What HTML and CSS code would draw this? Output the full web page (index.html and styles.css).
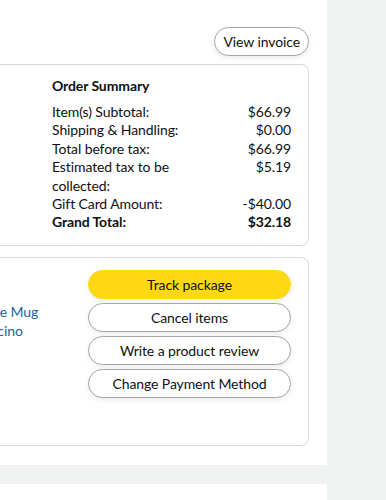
FILE: index.html
```html
<!DOCTYPE html>
<html lang="en">
<head>
    <meta charset="UTF-8">
    <meta name="viewport" content="width=device-width, initial-scale=1.0">
    <title>Order details</title>
    <link rel="stylesheet" href="styles.css">
</head>
<body>
    <div id="page">
        <div id="mainColumn">
            <div class="orderSection">
                <div class="orderHeader">
                    <a class="pillButton invoiceButton" href="#">View invoice</a>
                </div>

                <div class="card summaryCard">
                    <div class="summaryBox">
                        <h3 class="summaryTitle">Order Summary</h3>
                        <div class="summaryRow"><span class="label">Item(s) Subtotal:</span><span class="value">$66.99</span></div>
                        <div class="summaryRow"><span class="label">Shipping &amp; Handling:</span><span class="value">$0.00</span></div>
                        <div class="summaryRow"><span class="label">Total before tax:</span><span class="value">$66.99</span></div>
                        <div class="summaryRow"><span class="label">Estimated tax to be collected:</span><span class="value">$5.19</span></div>
                        <div class="summaryRow"><span class="label">Gift Card Amount:</span><span class="value">-$40.00</span></div>
                        <div class="summaryRow grandTotal"><span class="label">Grand Total:</span><span class="value">$32.18</span></div>
                    </div>
                </div>

                <div class="card shipmentCard">
                    <div class="itemInfo">
                        <a class="productLink" href="#">Tall Coffee Mug<br>- Cappuccino</a>
                    </div>
                    <div class="actionList">
                        <a class="pillButton primaryButton" href="#">Track package</a>
                        <a class="pillButton" href="#">Cancel items</a>
                        <a class="pillButton" href="#">Write a product review</a>
                        <a class="pillButton" href="#">Change Payment Method</a>
                    </div>
                </div>
            </div>
            <div class="sectionDivider"></div>
            <div class="orderSection nextSection"></div>
        </div>
        <div id="sideColumn"></div>
    </div>
</body>
</html>
```

FILE: styles.css
```css
body {
    margin: 0;
    font-family: Lato, "Liberation Sans", Arial, sans-serif;
    font-size: 14px;
    letter-spacing: -0.1px;
    color: #0f1111;
    background-color: #f0f2f2;
    overflow: hidden;
}
#page {
    display: flex;
    height: 500px;
}
#mainColumn {
    width: 327px;
    flex-shrink: 0;
    display: flex;
    flex-direction: column;
}
#sideColumn {
    flex: 1;
    background-color: #f0f2f2;
}
.orderSection {
    background-color: #fff;
    padding: 27px 18px 19px 0;
}
.nextSection {
    flex: 1;
    padding: 0;
}
.sectionDivider {
    height: 19px;
    background-color: #f0f2f2;
}
.orderHeader {
    display: flex;
    justify-content: flex-end;
    margin-bottom: 8px;
}
.card {
    margin-left: -40px;
    border: 1px solid #d5d9d9;
    border-radius: 8px;
    background-color: #fff;
}
.summaryCard {
    display: flex;
    justify-content: flex-end;
    padding: 12px 17px 13px 0;
    margin-bottom: 11px;
}
.summaryBox {
    width: 239px;
}
.summaryTitle {
    margin: 0 0 8px 0;
    font-size: 14px;
    font-weight: 700;
    line-height: 18px;
}
.summaryRow {
    display: flex;
    justify-content: space-between;
    line-height: 18.4px;
}
.summaryRow .label {
    width: 145px;
}
.summaryRow .value {
    text-align: right;
}
.grandTotal {
    font-weight: 700;
}
.shipmentCard {
    display: flex;
    padding: 12px 17px 47px 0;
}
.itemInfo {
    flex: 1;
    min-width: 0;
    padding-top: 32px;
}
.productLink {
    display: inline-block;
    margin-left: -18px;
    color: #2162a1;
    text-decoration: none;
    line-height: 19px;
    white-space: nowrap;
}
.actionList {
    width: 203px;
    flex-shrink: 0;
    display: flex;
    flex-direction: column;
    gap: 4px;
}
.pillButton {
    display: flex;
    justify-content: center;
    align-items: center;
    height: 27px;
    border: 1px solid #a2a6ac;
    border-radius: 100px;
    background-color: #fff;
    color: #0f1111;
    text-decoration: none;
    box-shadow: 0 2px 5px 0 rgba(213, 217, 217, 0.5);
}
.primaryButton {
    background-color: #ffd814;
    border-color: #ffd814;
}
.invoiceButton {
    padding: 0 8px;
}
```
